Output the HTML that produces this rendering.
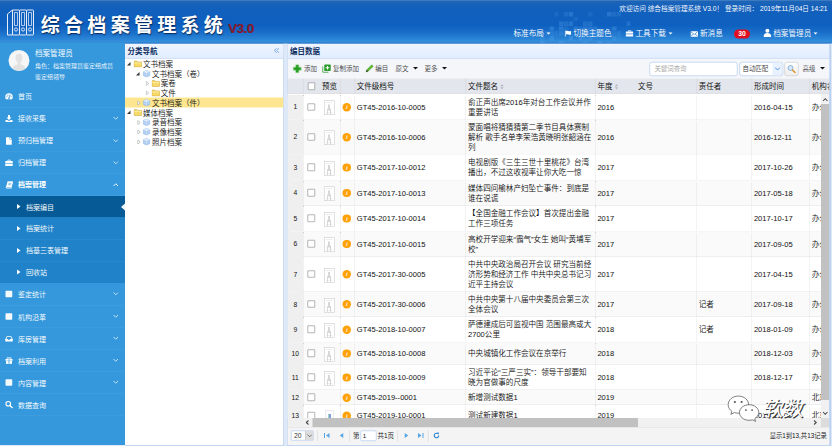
<!DOCTYPE html>
<html lang="zh-CN">
<head>
<meta charset="utf-8">
<title>综合档案管理系统 V3.0</title>
<style>
html,body{margin:0;padding:0;width:832px;height:446px;overflow:hidden;background:#dfe8f6}
#app{position:absolute;left:0;top:0;width:1664px;height:892px;transform:scale(.5);transform-origin:0 0;font-family:"Liberation Sans","Noto Sans CJK SC",sans-serif;font-size:15.15px;font-weight:350;color:#111;overflow:hidden;background:#dfe8f6}
#app *{box-sizing:border-box}
/* header */
#hd{position:absolute;left:0;top:0;width:1664px;height:86.6px;z-index:2;background:linear-gradient(to bottom,#4a86c8 0,#1d64b6 3px,#1260bc 14px,#0e60c0 50px,#1a70ca 66px,#2c88d8 80px,#3890dc 83.4px,#2f82d0 84.6px,#2f82d0 86.6px);color:#fff;overflow:hidden}
#hd .logo{position:absolute;left:13px;top:16px;width:58px;height:58px}
#hd .title{position:absolute;left:81.5px;top:22.5px;font-size:38px;line-height:56px;letter-spacing:8.6px;font-weight:700;white-space:nowrap;color:#fff;text-shadow:1px 2px 3px rgba(0,0,30,.7)}
#hd .ver{position:absolute;left:456px;top:38.5px;font-size:27px;line-height:34px;font-weight:bold;color:#8c1a2c;letter-spacing:-1px;text-shadow:1px 1px 1px rgba(0,0,40,.45)}
#hd .wel{position:absolute;right:9px;top:8px;font-size:13.3px;line-height:20px;white-space:pre;color:#fff}
#hd .nv{position:absolute;top:55px;height:24px;line-height:24px;font-size:15.2px;white-space:nowrap;color:#fff}
#hd .nv svg{vertical-align:-2px;margin-right:4px}
#hd .caret{display:inline-block;width:0;height:0;border-left:4px solid transparent;border-right:4px solid transparent;border-top:4.5px solid #fff;vertical-align:3px;margin-left:5px}
#hd .badge{position:absolute;left:1468px;top:59px;width:32px;height:18px;border-radius:9px;background:#e01020;color:#fff;font-size:13.8px;font-weight:bold;line-height:18px;text-align:center}
#hd .px{position:absolute;width:8.6px;height:8.6px;background:rgba(110,185,250,.24)}
/* sidebar */
#sb{position:absolute;left:0;top:85px;width:250px;height:805px;z-index:3;background:#3598dc;color:#fff;overflow:hidden}
#sb .av{position:absolute;left:17px;top:15px;width:42px;height:42px;border-radius:50%;background:#f6f6f6;overflow:hidden}
#sb .un{position:absolute;left:70px;top:10px;font-size:15.1px;line-height:22px;white-space:nowrap}
#sb .ur{position:absolute;left:70px;font-size:12px;line-height:18px;white-space:nowrap}
#sb .mi{position:absolute;left:0;width:250px;height:44.14px;line-height:44px;font-size:14px;white-space:nowrap;border-bottom:1px solid rgba(255,255,255,.08)}
#sb .mi .ic{position:absolute;left:10px;top:14px;width:16px;height:16px}
#sb .mi .tx{position:absolute;left:36px;top:0}
#sb .mi .chev{position:absolute;left:226px;top:18px;width:11px;height:7px}
#sb .sub{background:#2083c9;border-bottom:none}
#sb .sub .tx{left:52px}
#sb .sub .ar{position:absolute;left:34px;top:16.5px;width:0;height:0;border-top:5.5px solid transparent;border-bottom:5.5px solid transparent;border-left:7px solid #fff}
#sb .act{background:#065a96}
#sb .act:after{content:"";position:absolute;right:0;top:15px;width:0;height:0;border-top:7px solid transparent;border-bottom:7px solid transparent;border-right:8px solid #f0f6fb}
#sb .open{font-weight:bold}
/* tree panel */
#tp{position:absolute;left:250px;top:85px;width:318px;height:806px;background:#fff;border:1px solid #95b8e7;border-left:none;overflow:hidden}
.ph{position:absolute;left:0;top:0;right:0;height:32.4px;background:linear-gradient(to bottom,#95b8e7 0,#95b8e7 2.2px,#eff5ff 2.8px,#e0ecff 100%);border-bottom:1px solid #b4ccee;color:#0e2d5f;font-weight:bold;font-size:15px;line-height:34px;padding-left:5px;white-space:nowrap}
#tp .col{position:absolute;right:8px;top:9px;width:12px;height:12px}
#tp .tn{position:absolute;left:-1px;width:318px;height:19.4px;line-height:21px;font-size:15px;white-space:nowrap}
#tp .sel{background:#fde68f}
#tp .tn .ex{position:absolute;top:6.6px;width:0;height:0;border-left:7px solid transparent;border-bottom:7px solid #333}
#tp .tn .cl{position:absolute;top:5.6px;width:8px;height:10px}
#tp .tn .fi{position:absolute;top:2.6px;width:17px;height:15px}
#tp .tn .tt{position:absolute;top:0}
/* main panel */
#main{position:absolute;left:574px;top:85px;width:1087px;height:806px;background:#fff;border:1px solid #95b8e7;border-right:2px solid #86aee6;overflow:hidden}
#tb{position:absolute;left:0;right:0;top:32px;height:38.6px;background:#f4f6fa;font-size:13px;color:#444;white-space:nowrap}
#tb .b{position:absolute;top:0;height:38px;line-height:38px}
#tb .b svg{position:absolute;top:10px;left:0;width:18px;height:18px}
#tb .dn{display:inline-block;width:0;height:0;border-left:5px solid transparent;border-right:5px solid transparent;border-top:5px solid #111;vertical-align:2px;margin-left:9px}
#tb .inp{position:absolute;left:724px;top:5.5px;width:176px;height:28px;border:1px solid #95b8e7;border-radius:5px;background:#fff;font-size:12.8px;line-height:26px;color:#a0a0a0;padding-left:9px}
#tb .cmb{position:absolute;left:904px;top:5.5px;width:87px;height:28px;border:1px solid #95b8e7;border-radius:5px;background:#fff;font-size:12.8px;line-height:26px;color:#333;padding-left:5px;overflow:hidden}
#tb .cmb i{position:absolute;right:0;top:0;width:20px;height:26px;background:#e8f1ff}
#tb .cmb svg{position:absolute;right:4px;top:9px;width:12px;height:8px}
#tb .sbt{position:absolute;left:994px;top:5.5px;width:28px;height:28px;border:1px solid #bbb;border-radius:5px;background:linear-gradient(#fff,#eee)}
#tb .sbt svg{position:absolute;left:4px;top:4px;width:18px;height:18px}
#gh{position:absolute;left:0;right:0;top:70.6px;height:31.4px;background:#e3e6ec;font-size:15px;font-weight:400;line-height:31px;color:#111;white-space:nowrap;border-bottom:1px solid #dcdcdc}
#gh .h{position:absolute;top:0;height:31.4px;padding-left:3.8px;border-left:1px dotted #c4c4c4}
#gh .so{display:inline-block;width:8px;height:13px;vertical-align:-2px;margin-left:4px}
.cb{display:block;flex:none;width:14.6px;height:14.6px;border:1.6px solid #6f6f6f;border-radius:1px;background:#fff}
#gbody{position:absolute;left:0;top:103px;width:1067.5px;height:647.4px;overflow:hidden;background:#fff}
.r{position:relative;width:1100px;border-bottom:1px dotted #c8c8c8;background:#fff}
.r.alt{background:#fafafa}
.c{position:absolute;top:0;bottom:0;display:flex;align-items:center;border-left:1px dotted #ccc;font-size:15.15px;line-height:19.6px;white-space:nowrap;overflow:hidden}
.c>span.t{padding-left:3.8px;position:relative;top:0}
.c0{left:0;width:31.4px;background:#efefef;border-left:none;justify-content:center;font-size:13.4px;padding-top:.6px;font-weight:400}
.c1{left:31.4px;width:33.6px;justify-content:center;padding-right:2px}
.c2{left:65px;width:40.4px;justify-content:center;border-left:none}
.c3{left:105.4px;width:28.4px;justify-content:center}
.c4{left:133.8px;width:222.4px}
.c5{left:356.2px;width:258.8px}
.c6{left:615px;width:82px}
.c7{left:697px;width:120.8px;border-left:none}
.c8{left:817.8px;width:110.2px}
.c9{left:928px;width:115.8px}
.c10{left:1043.8px;width:60px}
.th1{display:block;flex:none;position:relative;left:-1.5px;top:2px;width:21.5px;height:29px;border:1.2px solid #c2c2c2;background:#fff}
.th1 i{position:absolute;left:3px;top:3px;right:3px;bottom:3px;border-top:1px solid #ddd;border-bottom:1px solid #e4e4e4}
.th1 b{position:absolute;left:8px;top:7px;width:2px;height:12px;background:#b0b0b0;box-shadow:3px 8px 0 -0.2px #c8c8c8,-3px 8px 0 -0.2px #d0d0d0}
.th2{display:block;flex:none;top:2px;left:-2px;position:relative;width:17px;height:26px;border:1px solid #d8dce8;background:#fdfdff}
.th2 i{position:absolute;left:6px;top:7px;width:5px;height:12px;background:#7fa3d8;border-left:1.500px solid #8fc79a}
.oi{display:block;flex:none;position:relative;left:-1.6px;top:.6px;width:16.6px;height:16.6px;border-radius:50%;background:#ffa20a;color:#fff;font-size:12px;line-height:16.6px;text-align:center;font-style:italic;font-weight:bold}
.oi i{font-style:italic;opacity:.85}
/* scrollbars */
#vs{position:absolute;left:1067.2px;top:102px;width:16.3px;height:648.4px;background:#f1f1f1}
#vs .t{position:absolute;left:0;top:20px;width:17px;height:592px;background:#c1c1c1}
#vs svg{position:absolute;left:3px;width:11px;height:7px}
#hs{position:absolute;left:31.4px;top:750.4px;width:1035.8px;height:17.4px;background:#f1f1f1}
#hs .t{position:absolute;left:19px;top:0;height:17.4px;width:651px;background:#c1c1c1}
#hs svg{position:absolute;top:4px;width:7px;height:10px}
#corner{position:absolute;left:1067.2px;top:750.4px;width:16.3px;height:17.4px;background:#dcdcdc}
#hsl{position:absolute;left:0;top:750.4px;width:31.4px;height:17.4px;background:#efefef}
/* pager */
#pg{position:absolute;left:0;right:0;top:767.8px;height:36.2px;background:#f4f4f4;border-top:1px solid #dddddd;font-size:13px;color:#111;white-space:nowrap}
#pg .sel{position:absolute;left:6.5px;top:6.5px;width:45px;height:20px;border:1px solid #95b8e7;border-radius:2px;background:#fff;font-size:13.6px;line-height:18px;padding-left:5.5px;color:#333}
#pg .sel i{position:absolute;right:0;top:0;width:16px;height:18px;background:#ddd;border-left:1px solid #bbb}
#pg .sep{position:absolute;top:6px;width:0;height:22px;border-left:1px solid #ccc;border-right:1px solid #fff}
#pg svg{position:absolute;top:9px;width:14px;height:14px}
#pg .tx{position:absolute;top:0;line-height:34px}
#pg .pin{position:absolute;left:145.5px;top:6.5px;width:32px;height:21px;border:1px solid #95b8e7;border-radius:3px;background:#fff;font-size:12.5px;line-height:19px;padding-left:4px}
#pg .inf{position:absolute;right:5.5px;top:0;line-height:32px;font-size:12.6px}
/* watermark */
#wm{position:absolute;left:878px;top:703px;width:170px;height:56px}
#wm .t{position:absolute;left:74px;top:4px;font-size:41px;line-height:48px;color:#fff;white-space:nowrap;font-weight:400;transform:skewX(-10deg);text-shadow:2px 2px 0 #353535,2.8px 2.6px 1px rgba(50,50,50,.6)}

</style>
</head>
<body>
<div id="app">
<div id="hd">
<span class="px" style="left:1108.8px;top:24.0px;opacity:0.45"></span><span class="px" style="left:1128.0px;top:24.0px;opacity:0.64"></span><span class="px" style="left:1137.6px;top:24.0px;opacity:1.00"></span><span class="px" style="left:1176.0px;top:24.0px;opacity:0.45"></span><span class="px" style="left:1214.4px;top:24.0px;opacity:1.00"></span><span class="px" style="left:1224.0px;top:24.0px;opacity:0.64"></span><span class="px" style="left:1233.6px;top:24.0px;opacity:0.64"></span><span class="px" style="left:1147.2px;top:33.6px;opacity:0.45"></span><span class="px" style="left:1118.4px;top:43.2px;opacity:1.00"></span><span class="px" style="left:1128.0px;top:43.2px;opacity:0.82"></span><span class="px" style="left:1137.6px;top:43.2px;opacity:1.00"></span><span class="px" style="left:1166.4px;top:43.2px;opacity:0.82"></span><span class="px" style="left:1176.0px;top:43.2px;opacity:0.82"></span><span class="px" style="left:1252.8px;top:43.2px;opacity:0.82"></span><span class="px" style="left:1099.2px;top:52.8px;opacity:1.00"></span><span class="px" style="left:1118.4px;top:52.8px;opacity:1.00"></span><span class="px" style="left:1128.0px;top:52.8px;opacity:0.45"></span><span class="px" style="left:1147.2px;top:52.8px;opacity:0.82"></span><span class="px" style="left:1156.8px;top:52.8px;opacity:0.64"></span><span class="px" style="left:1166.4px;top:52.8px;opacity:1.00"></span><span class="px" style="left:1176.0px;top:52.8px;opacity:1.00"></span><span class="px" style="left:1185.6px;top:52.8px;opacity:0.82"></span><span class="px" style="left:1224.0px;top:52.8px;opacity:1.00"></span><span class="px" style="left:1080.0px;top:62.4px;opacity:0.64"></span><span class="px" style="left:1089.6px;top:62.4px;opacity:0.64"></span><span class="px" style="left:1099.2px;top:62.4px;opacity:0.64"></span><span class="px" style="left:1108.8px;top:62.4px;opacity:0.45"></span><span class="px" style="left:1118.4px;top:62.4px;opacity:0.82"></span><span class="px" style="left:1137.6px;top:62.4px;opacity:0.64"></span><span class="px" style="left:1156.8px;top:62.4px;opacity:0.45"></span><span class="px" style="left:1166.4px;top:62.4px;opacity:1.00"></span><span class="px" style="left:1176.0px;top:62.4px;opacity:1.00"></span><span class="px" style="left:1185.6px;top:62.4px;opacity:1.00"></span><span class="px" style="left:1195.2px;top:62.4px;opacity:0.45"></span><span class="px" style="left:1224.0px;top:62.4px;opacity:0.45"></span><span class="px" style="left:1233.6px;top:62.4px;opacity:0.64"></span><span class="px" style="left:1080.0px;top:72.0px;opacity:0.64"></span><span class="px" style="left:1099.2px;top:72.0px;opacity:0.82"></span><span class="px" style="left:1137.6px;top:72.0px;opacity:1.00"></span><span class="px" style="left:1156.8px;top:72.0px;opacity:1.00"></span><span class="px" style="left:1166.4px;top:72.0px;opacity:0.64"></span><span class="px" style="left:1176.0px;top:72.0px;opacity:0.82"></span><span class="px" style="left:1224.0px;top:72.0px;opacity:0.82"></span><span class="px" style="left:1233.6px;top:72.0px;opacity:0.45"></span><span class="px" style="left:1080.0px;top:81.6px;opacity:0.82"></span><span class="px" style="left:1118.4px;top:81.6px;opacity:0.82"></span><span class="px" style="left:1166.4px;top:81.6px;opacity:0.64"></span><span class="px" style="left:1195.2px;top:81.6px;opacity:1.00"></span><span class="px" style="left:1214.4px;top:81.6px;opacity:0.45"></span>
<svg class="logo" viewBox="0 0 58 58" fill="none" stroke="#e8eef8" stroke-width="2" stroke-linejoin="round">
<path d="M2 12 L12 4 V54 H2 Z"/>
<rect x="12" y="4" width="14" height="50" rx="1.5"/><rect x="26" y="4" width="14" height="50" rx="1.5"/><rect x="40" y="4" width="14" height="50" rx="1.5"/>
<rect x="16" y="9" width="6" height="26" stroke-width="1.5"/><rect x="30" y="9" width="6" height="26" stroke-width="1.5"/><rect x="44" y="9" width="6" height="26" stroke-width="1.5"/>
<circle cx="19" cy="43" r="3.2" stroke-width="1.8"/><circle cx="33" cy="43" r="3.2" stroke-width="1.8"/><circle cx="47" cy="43" r="3.2" stroke-width="1.8"/>
</svg>
<div class="title">综合档案管理系统</div>
<div class="ver">V3.0</div>
<div class="wel">欢迎访问 综合档案管理系统 V3.0！ 登录时间： 2019年11月04日 14:21</div>
<div class="nv" style="left:1027px">标准布局<span class="caret"></span></div>
<div class="nv" style="left:1129px"><svg width="14" height="14" viewBox="0 0 14 14"><path d="M1.5 1v12" stroke="#fff" stroke-width="1.8"/><path d="M3 2c3-1.5 5 1.5 10 0v7c-5 1.500-7-1.500-10 0z" fill="#fff"/></svg>切换主题色</div>
<div class="nv" style="left:1251px"><svg width="16" height="14" viewBox="0 0 16 14"><path d="M5.500 3V1.500h5V3" stroke="#fff" stroke-width="1.600" fill="none"/><rect x="0.500" y="3" width="15" height="10" rx="1.200" fill="#fff"/><rect x="0.500" y="7.300" width="15" height="1.200" fill="#1a6cc6"/></svg>工具下载<span class="caret"></span></div>
<div class="nv" style="left:1381px"><svg width="15" height="12" viewBox="0 0 15 12"><rect x="0" y="0.500" width="15" height="11" rx="1.200" fill="#fff"/><path d="M1 1.500l6.500 5.500 6.500-5.500M1 10.500l4.500-4.500M14 10.500l-4.500-4.500" stroke="#1a6cc6" stroke-width="1.300" fill="none"/></svg>新消息</div>
<div class="badge">30</div>
<div class="nv" style="left:1527px"><svg width="15.500" height="17" viewBox="0 0 14 15"><circle cx="7" cy="4" r="3.600" fill="#fff"/><path d="M0 15c0-5 2.500-7 7-7s7 2 7 7z" fill="#fff"/></svg>档案管理员<span class="caret"></span></div>
</div>

<div id="sb">
<div class="av"><svg viewBox="0 0 42 42" width="42" height="42"><ellipse cx="21" cy="16" rx="7" ry="8.500" fill="#e2e2e2"/><path d="M7 44c0-11 5-15.500 14-15.500s14 4.500 14 15.500z" fill="#e2e2e2"/><rect x="18" y="22" width="6" height="8" fill="#e2e2e2"/></svg></div>
<div class="un">档案管理员</div>
<div class="ur" style="top:38px">角色：档案管理员鉴定组成员</div>
<div class="ur" style="top:59px">鉴定组领导</div>
<div class="mi" style="top:86.40px;height:44.08px;line-height:43.58px"><svg class="ic" viewBox="0 0 16 16"><path d="M8 1.500A7.500 7.500 0 0 0 0.500 9c0 1.700.5 3.200 1.300 4.500h12.400c.8-1.300 1.300-2.800 1.300-4.500A7.500 7.500 0 0 0 8 1.500z" fill="#fff"/><circle cx="3.800" cy="8.500" r="1.200" fill="#3598dc"/><circle cx="5.800" cy="5.200" r="1.200" fill="#3598dc"/><circle cx="10.200" cy="5.200" r="1.200" fill="#3598dc"/><circle cx="12.200" cy="8.500" r="1.200" fill="#3598dc"/><path d="M8 11.500l1.300-5" stroke="#3598dc" stroke-width="1.600" stroke-linecap="round"/><circle cx="8" cy="11.300" r="1.500" fill="#3598dc"/></svg><span class="tx">首页</span></div>
<div class="mi" style="top:130.48px;height:44.08px;line-height:43.58px"><svg class="ic" viewBox="0 0 16 16"><path d="M6 1h4v5h3l-5 5-5-5h3z" fill="#fff"/><path d="M1 11h4l1 1.500h4l1-1.500h4v4H1z" fill="#fff"/></svg><span class="tx">接收采集</span><svg class="chev" viewBox="0 0 11 7"><path d="M1 1l4.500 4.500L10 1" stroke="#e6f1fa" stroke-width="1.600" fill="none"/></svg></div>
<div class="mi" style="top:174.56px;height:44.08px;line-height:43.58px"><svg class="ic" viewBox="0 0 16 16"><path d="M2 0.500h7v4.500h4.500V15.500H2z" fill="#fff"/><path d="M10 0.500l3.500 3.500H10z" fill="#fff"/></svg><span class="tx">预归档管理</span><svg class="chev" viewBox="0 0 11 7"><path d="M1 1l4.500 4.500L10 1" stroke="#e6f1fa" stroke-width="1.600" fill="none"/></svg></div>
<div class="mi" style="top:218.64px;height:44.08px;line-height:43.58px"><svg class="ic" viewBox="0 0 16 16"><path d="M5.500 4V2.200h5V4" stroke="#fff" stroke-width="1.500" fill="none"/><rect x="0.500" y="4" width="15" height="10" rx="1.200" fill="#fff"/><rect x="0.500" y="8.200" width="15" height="1.200" fill="#3598dc"/></svg><span class="tx">归档管理</span><svg class="chev" viewBox="0 0 11 7"><path d="M1 1l4.500 4.500L10 1" stroke="#e6f1fa" stroke-width="1.600" fill="none"/></svg></div>
<div class="mi open" style="top:262.72px;height:44.08px;line-height:43.58px"><svg class="ic" viewBox="0 0 16 16"><path d="M5 1.500h10.500l-3 10.500H3c-1.600 0-1.600 2.300 0 2.300h9.800l.6-2" fill="none" stroke="#fff" stroke-width="1.500" stroke-linejoin="round"/><path d="M5 1.500h10.500l-3 10.500H2z" fill="#fff"/><path d="M7 4.800h5.500M6.300 7.300h5.500" stroke="#3598dc" stroke-width="1.100"/></svg><span class="tx">档案管理</span><svg class="chev" viewBox="0 0 11 7"><path d="M1 6l4.500-4.500L10 6" stroke="#fff" stroke-width="1.800" fill="none"/></svg></div>
<div class="mi sub act" style="top:306.80px;height:43.66px;line-height:44.36px"><span class="ar"></span><span class="tx">档案编目</span></div>
<div class="mi sub" style="top:350.46px;height:43.66px;line-height:44.36px"><span class="ar"></span><span class="tx">档案统计</span></div>
<div class="mi sub" style="top:394.12px;height:43.66px;line-height:44.36px"><span class="ar"></span><span class="tx">档基三表管理</span></div>
<div class="mi sub" style="top:437.78px;height:43.66px;line-height:44.36px"><span class="ar"></span><span class="tx">回收站</span></div>
<div class="mi" style="top:481.44px;height:44.2px;line-height:46.50px"><svg class="ic" viewBox="0 0 16 16"><rect x="1" y="1.500" width="13.500" height="13" rx="1.600" fill="#f4f9fd"/></svg><span class="tx">鉴定统计</span><svg class="chev" viewBox="0 0 11 7"><path d="M1 1l4.500 4.500L10 1" stroke="#e6f1fa" stroke-width="1.600" fill="none"/></svg></div>
<div class="mi" style="top:525.64px;height:44.2px;line-height:46.50px"><svg class="ic" viewBox="0 0 16 16"><rect x="1" y="1.500" width="13.500" height="13" rx="1.600" fill="#f4f9fd"/></svg><span class="tx">机构沿革</span><svg class="chev" viewBox="0 0 11 7"><path d="M1 1l4.500 4.500L10 1" stroke="#e6f1fa" stroke-width="1.600" fill="none"/></svg></div>
<div class="mi" style="top:569.84px;height:44.2px;line-height:46.50px"><svg class="ic" viewBox="0 0 16 16"><path d="M3.500 3.500h9l3 6v4.500H0.500V9.500z" fill="#fff"/><path d="M4.500 5h7l1.800 4H10.500l-0.800 1.600H6.300L5.500 9H2.700z" fill="#3598dc"/></svg><span class="tx">库房管理</span><svg class="chev" viewBox="0 0 11 7"><path d="M1 1l4.500 4.500L10 1" stroke="#e6f1fa" stroke-width="1.600" fill="none"/></svg></div>
<div class="mi" style="top:614.04px;height:44.2px;line-height:46.50px"><svg class="ic" viewBox="0 0 16 16"><rect x="1" y="5" width="14" height="3.500" fill="#fff"/><rect x="2" y="9.200" width="12" height="5.500" fill="#fff"/><path d="M8 5V14.500" stroke="#3598dc" stroke-width="1.500"/><circle cx="5.500" cy="3.200" r="1.700" stroke="#fff" stroke-width="1.300" fill="none"/><circle cx="10.500" cy="3.200" r="1.700" stroke="#fff" stroke-width="1.300" fill="none"/></svg><span class="tx">档案利用</span><svg class="chev" viewBox="0 0 11 7"><path d="M1 1l4.500 4.500L10 1" stroke="#e6f1fa" stroke-width="1.600" fill="none"/></svg></div>
<div class="mi" style="top:658.24px;height:44.2px;line-height:46.50px"><svg class="ic" viewBox="0 0 16 16"><rect x="1" y="1.500" width="13.500" height="13" rx="1.600" fill="#f4f9fd"/></svg><span class="tx">内容管理</span><svg class="chev" viewBox="0 0 11 7"><path d="M1 1l4.500 4.500L10 1" stroke="#e6f1fa" stroke-width="1.600" fill="none"/></svg></div>
<div class="mi" style="top:702.44px;height:44.2px;line-height:46.50px"><svg class="ic" viewBox="0 0 16 16"><circle cx="6.500" cy="6.500" r="4.600" stroke="#fff" stroke-width="2.200" fill="none"/><path d="M10 10l4.500 4.500" stroke="#fff" stroke-width="2.600" stroke-linecap="round"/></svg><span class="tx">数据查询</span></div>
</div>
<div id="tp">
<div class="ph">分类导航<svg class="col" viewBox="0 0 12 12"><path d="M6 1.500L2 6l4 4.500M10.500 1.500L6.500 6l4 4.500" stroke="#5b8fd9" stroke-width="1.500" fill="none"/></svg></div>
<div class="tn " style="top:31.60px"><span class="ex" style="left:5.0px"></span><svg class="fi" style="left:18.0px" viewBox="0 0 17 15"><path d="M1 3.500c0-1 .5-1.500 1.500-1.500h4l1.500 1.800h7c1 0 1.500.5 1.500 1.500V12.500c0 1-.5 1.500-1.500 1.500h-12.500c-1 0-1.500-.5-1.500-1.500z" fill="#f7d96a" stroke="#c9a02c" stroke-width="1"/><path d="M1.500 6h14" stroke="#fdf0b0" stroke-width="1.500"/></svg><span class="tt" style="left:37.0px">文书档案</span></div>
<div class="tn " style="top:51.02px"><span class="ex" style="left:22.6px"></span><svg class="fi" style="left:35.8px" viewBox="0 0 17 15"><path d="M8 0.500l6.500 3.200v7.300L8 14.500 1.500 11V3.700z" fill="#a9c9f1" stroke="#7fabe2" stroke-width=".8"/><path d="M8 0.500l6.500 3.200L8 7 1.500 3.700z" fill="#dbe9fb"/><path d="M8 7v7.500M1.500 7.300L8 10.700l6.500-3.400" stroke="#e4effc" stroke-width=".8" fill="none"/></svg><span class="tt" style="left:54.8px">文书档案（卷）</span></div>
<div class="tn " style="top:70.44px"><svg class="cl" style="left:42.2px" viewBox="0 0 8 10"><path d="M1.500 1l5 4-5 4z" fill="#fff" stroke="#999" stroke-width="1"/></svg><svg class="fi" style="left:53.6px" viewBox="0 0 17 15"><path d="M1 3.500c0-1 .5-1.500 1.500-1.500h4l1.500 1.800h7c1 0 1.500.5 1.500 1.500V12.500c0 1-.5 1.500-1.500 1.500h-12.500c-1 0-1.500-.5-1.500-1.500z" fill="#f7d96a" stroke="#c9a02c" stroke-width="1"/><path d="M1.500 6h14" stroke="#fdf0b0" stroke-width="1.500"/></svg><span class="tt" style="left:72.6px">案卷</span></div>
<div class="tn " style="top:89.86px"><svg class="cl" style="left:42.2px" viewBox="0 0 8 10"><path d="M1.500 1l5 4-5 4z" fill="#fff" stroke="#999" stroke-width="1"/></svg><svg class="fi" style="left:53.6px" viewBox="0 0 17 15"><path d="M1 3.500c0-1 .5-1.500 1.500-1.500h4l1.500 1.800h7c1 0 1.500.5 1.500 1.500V12.500c0 1-.5 1.500-1.500 1.500h-12.500c-1 0-1.500-.5-1.500-1.500z" fill="#f7d96a" stroke="#c9a02c" stroke-width="1"/><path d="M1.500 6h14" stroke="#fdf0b0" stroke-width="1.500"/></svg><span class="tt" style="left:72.6px">文件</span></div>
<div class="tn sel" style="top:109.28px"><svg class="cl" style="left:24.6px" viewBox="0 0 8 10"><path d="M1.500 1l5 4-5 4z" fill="#fff" stroke="#999" stroke-width="1"/></svg><svg class="fi" style="left:35.8px" viewBox="0 0 17 15"><path d="M8 0.500l6.500 3.200v7.300L8 14.500 1.500 11V3.700z" fill="#a9c9f1" stroke="#7fabe2" stroke-width=".8"/><path d="M8 0.500l6.500 3.200L8 7 1.500 3.700z" fill="#dbe9fb"/><path d="M8 7v7.500M1.500 7.300L8 10.700l6.500-3.400" stroke="#e4effc" stroke-width=".8" fill="none"/></svg><span class="tt" style="left:54.8px">文书档案（件）</span></div>
<div class="tn " style="top:128.70px"><span class="ex" style="left:5.0px"></span><svg class="fi" style="left:18.0px" viewBox="0 0 17 15"><path d="M1 3.500c0-1 .5-1.500 1.500-1.500h4l1.500 1.800h7c1 0 1.500.5 1.500 1.500V12.500c0 1-.5 1.500-1.500 1.500h-12.500c-1 0-1.500-.5-1.500-1.500z" fill="#f7d96a" stroke="#c9a02c" stroke-width="1"/><path d="M1.500 6h14" stroke="#fdf0b0" stroke-width="1.500"/></svg><span class="tt" style="left:37.0px">媒体档案</span></div>
<div class="tn " style="top:148.12px"><svg class="cl" style="left:24.6px" viewBox="0 0 8 10"><path d="M1.500 1l5 4-5 4z" fill="#fff" stroke="#999" stroke-width="1"/></svg><svg class="fi" style="left:35.8px" viewBox="0 0 17 15"><path d="M8 0.500l6.500 3.200v7.300L8 14.500 1.500 11V3.700z" fill="#a9c9f1" stroke="#7fabe2" stroke-width=".8"/><path d="M8 0.500l6.500 3.200L8 7 1.500 3.700z" fill="#dbe9fb"/><path d="M8 7v7.500M1.500 7.300L8 10.700l6.500-3.400" stroke="#e4effc" stroke-width=".8" fill="none"/></svg><span class="tt" style="left:54.8px">录音档案</span></div>
<div class="tn " style="top:167.54px"><svg class="cl" style="left:24.6px" viewBox="0 0 8 10"><path d="M1.500 1l5 4-5 4z" fill="#fff" stroke="#999" stroke-width="1"/></svg><svg class="fi" style="left:35.8px" viewBox="0 0 17 15"><path d="M8 0.500l6.500 3.200v7.300L8 14.500 1.500 11V3.700z" fill="#a9c9f1" stroke="#7fabe2" stroke-width=".8"/><path d="M8 0.500l6.500 3.200L8 7 1.500 3.700z" fill="#dbe9fb"/><path d="M8 7v7.500M1.500 7.300L8 10.700l6.500-3.400" stroke="#e4effc" stroke-width=".8" fill="none"/></svg><span class="tt" style="left:54.8px">录像档案</span></div>
<div class="tn " style="top:186.96px"><svg class="cl" style="left:24.6px" viewBox="0 0 8 10"><path d="M1.500 1l5 4-5 4z" fill="#fff" stroke="#999" stroke-width="1"/></svg><svg class="fi" style="left:35.8px" viewBox="0 0 17 15"><path d="M8 0.500l6.500 3.200v7.300L8 14.500 1.500 11V3.700z" fill="#a9c9f1" stroke="#7fabe2" stroke-width=".8"/><path d="M8 0.500l6.500 3.200L8 7 1.500 3.700z" fill="#dbe9fb"/><path d="M8 7v7.500M1.500 7.300L8 10.700l6.500-3.400" stroke="#e4effc" stroke-width=".8" fill="none"/></svg><span class="tt" style="left:54.8px">照片档案</span></div>
</div>
<div id="main">
<div class="ph">编目数据</div>
<div id="tb">
<div class="b" style="left:10px;padding-left:23px"><svg viewBox="0 0 18 18" style="width:19px;height:19px;top:9.500px;left:-0.500px"><path d="M6.800 2.200h4.400v4.600h4.600v4.400h-4.600v4.600H6.800v-4.600H2.200V6.800h4.600z" fill="#b4e2ae" stroke="#b4e2ae" stroke-width="3.600" stroke-linejoin="round"/><path d="M7 2.600h4v4.400h4.400v4h-4.400v4.400H7v-4.400H2.600V7H7z" fill="#239c23" stroke="#239c23" stroke-width=".8" stroke-linejoin="round"/></svg>添加</div>
<div class="b" style="left:69px;padding-left:22px"><svg viewBox="0 0 18 18"><path d="M1.500 5v11.500H13" stroke="#3aa03a" stroke-width="1.600" fill="none"/><rect x="4.500" y="1" width="13" height="13" rx="1.500" fill="#2c9c2c"/><path d="M11 4v7M7.500 7.500h7" stroke="#fff" stroke-width="2.200"/></svg>复制添加</div>
<div class="b" style="left:155px;padding-left:20.500px"><svg viewBox="0 0 18 18"><path d="M2 16l1.500-4.500L13.500 1.500l3 3L6.500 14.500z" fill="#5cb82c" stroke="#3f8f1c" stroke-width=".8"/><path d="M2 16l1.500-4.500 3 3z" fill="#333"/></svg>编目</div>
<div class="b" style="left:216px">原文<span class="dn"></span></div>
<div class="b" style="left:274px">更多<span class="dn"></span></div>
<div class="inp">关键词查询</div>
<div class="cmb">自动匹配<i></i><svg viewBox="0 0 12 8"><path d="M1 1l5 5 5-5" stroke="#3b7fd6" stroke-width="1.600" fill="none"/></svg></div>
<div class="sbt"><svg viewBox="0 0 18 18"><circle cx="7" cy="7" r="5" fill="#d6e8fa" stroke="#7aa6d8" stroke-width="1.600"/><path d="M11 11l5 5" stroke="#e0932c" stroke-width="3" stroke-linecap="round"/></svg></div>
<div class="b" style="left:1030px">高级<span class="dn"></span></div>
</div>
<div id="gh">
<div class="h" style="left:0;width:31.400px;border-left:none"></div>
<div class="h" style="left:31.400px;width:33.600px;padding-left:8.500px"><span class="cb" style="margin-top:8.500px"></span></div>
<div class="h" style="left:65px;width:40.400px;border-left:none;padding-left:4px">预览</div>
<div class="h" style="left:105.400px;width:28.400px"></div>
<div class="h" style="left:133.800px;width:222.400px">文件级档号</div>
<div class="h" style="left:356.200px;width:258.800px">文件题名<svg class="so" viewBox="0 0 7 11"><path d="M3.500 0.500L6.500 4.500h-6zM3.500 10.500L6.500 6.500h-6z" fill="#b4b9c4"/></svg></div>
<div class="h" style="left:615px;width:82px">年度<svg class="so" viewBox="0 0 7 11"><path d="M3.500 0.500L6.500 4.500h-6zM3.500 10.500L6.500 6.500h-6z" fill="#b4b9c4"/></svg></div>
<div class="h" style="left:697px;width:120.800px;border-left:none">文号</div>
<div class="h" style="left:817.800px;width:110.200px">责任者</div>
<div class="h" style="left:928px;width:115.800px">形成时间</div>
<div class="h" style="left:1043.800px;width:40px;overflow:hidden">机构名称</div>
</div>

<div id="gbody">
<div class="r" style="height:50.6px">
<div class="c c0">1</div><div class="c c1"><span class="cb"></span></div><div class="c c2"><span class="th1"><i></i><b></b></span></div><div class="c c3"><span class="oi"><i>i</i></span></div><div class="c c4"><span class="t">GT45-2016-10-0005</span></div><div class="c c5"><span class="t">俞正声出席2016年对台工作会议并作<br>重要讲话</span></div><div class="c c6"><span class="t">2016</span></div><div class="c c7"></div><div class="c c8"><span class="t"></span></div><div class="c c9"><span class="t">2016-04-15</span></div><div class="c c10"><span class="t">办公室</span></div>
</div>
<div class="r alt" style="height:69.8px">
<div class="c c0">2</div><div class="c c1"><span class="cb"></span></div><div class="c c2"><span class="th1"><i></i><b></b></span></div><div class="c c3"><span class="oi"><i>i</i></span></div><div class="c c4"><span class="t">GT45-2016-10-0006</span></div><div class="c c5"><span class="t">蒙面唱将猜猜猜第二季节目具体赛制<br>解析 歌手名单李荣浩黄晓明张韶涵在<br>列</span></div><div class="c c6"><span class="t">2016</span></div><div class="c c7"></div><div class="c c8"><span class="t"></span></div><div class="c c9"><span class="t">2016-12-11</span></div><div class="c c10"><span class="t">办公室</span></div>
</div>
<div class="r" style="height:51.2px">
<div class="c c0">3</div><div class="c c1"><span class="cb"></span></div><div class="c c2"><span class="th1"><i></i><b></b></span></div><div class="c c3"><span class="oi"><i>i</i></span></div><div class="c c4"><span class="t">GT45-2017-10-0012</span></div><div class="c c5"><span class="t">电视剧版《三生三世十里桃花》台湾<br>播出，不过这收视率让你大吃一惊</span></div><div class="c c6"><span class="t">2017</span></div><div class="c c7"></div><div class="c c8"><span class="t"></span></div><div class="c c9"><span class="t">2017-10-26</span></div><div class="c c10"><span class="t">办公室</span></div>
</div>
<div class="r alt" style="height:51.0px">
<div class="c c0">4</div><div class="c c1"><span class="cb"></span></div><div class="c c2"><span class="th1"><i></i><b></b></span></div><div class="c c3"><span class="oi"><i>i</i></span></div><div class="c c4"><span class="t">GT45-2017-10-0013</span></div><div class="c c5"><span class="t">媒体四问榆林产妇坠亡事件：到底是<br>谁在说谎</span></div><div class="c c6"><span class="t">2017</span></div><div class="c c7"></div><div class="c c8"><span class="t"></span></div><div class="c c9"><span class="t">2017-05-18</span></div><div class="c c10"><span class="t">办公室</span></div>
</div>
<div class="r" style="height:51.0px">
<div class="c c0">5</div><div class="c c1"><span class="cb"></span></div><div class="c c2"><span class="th1"><i></i><b></b></span></div><div class="c c3"><span class="oi"><i>i</i></span></div><div class="c c4"><span class="t">GT45-2017-10-0014</span></div><div class="c c5"><span class="t">【全国金融工作会议】首次提出金融<br>工作三项任务</span></div><div class="c c6"><span class="t">2017</span></div><div class="c c7"></div><div class="c c8"><span class="t"></span></div><div class="c c9"><span class="t">2017-10-17</span></div><div class="c c10"><span class="t">办公室</span></div>
</div>
<div class="r alt" style="height:51.0px">
<div class="c c0">6</div><div class="c c1"><span class="cb"></span></div><div class="c c2"><span class="th1"><i></i><b></b></span></div><div class="c c3"><span class="oi"><i>i</i></span></div><div class="c c4"><span class="t">GT45-2017-10-0015</span></div><div class="c c5"><span class="t">高校开学迎来“霸气”女生 她叫“黄埔军<br>校”</span></div><div class="c c6"><span class="t">2017</span></div><div class="c c7"></div><div class="c c8"><span class="t"></span></div><div class="c c9"><span class="t">2017-09-05</span></div><div class="c c10"><span class="t">办公室</span></div>
</div>
<div class="r" style="height:70.0px">
<div class="c c0">7</div><div class="c c1"><span class="cb"></span></div><div class="c c2"><span class="th1"><i></i><b></b></span></div><div class="c c3"><span class="oi"><i>i</i></span></div><div class="c c4"><span class="t">GT45-2017-30-0005</span></div><div class="c c5"><span class="t">中共中央政治局召开会议 研究当前经<br>济形势和经济工作 中共中央总书记习<br>近平主持会议</span></div><div class="c c6"><span class="t">2017</span></div><div class="c c7"></div><div class="c c8"><span class="t"></span></div><div class="c c9"><span class="t">2017-04-15</span></div><div class="c c10"><span class="t">办公室</span></div>
</div>
<div class="r alt" style="height:50.2px">
<div class="c c0">8</div><div class="c c1"><span class="cb"></span></div><div class="c c2"><span class="th1"><i></i><b></b></span></div><div class="c c3"><span class="oi"><i>i</i></span></div><div class="c c4"><span class="t">GT45-2017-30-0006</span></div><div class="c c5"><span class="t">中共中央第十八届中央委员会第三次<br>全体会议</span></div><div class="c c6"><span class="t">2017</span></div><div class="c c7"></div><div class="c c8"><span class="t">记者</span></div><div class="c c9"><span class="t">2017-09-18</span></div><div class="c c10"><span class="t">办公室</span></div>
</div>
<div class="r" style="height:50.8px">
<div class="c c0">9</div><div class="c c1"><span class="cb"></span></div><div class="c c2"><span class="th1"><i></i><b></b></span></div><div class="c c3"><span class="oi"><i>i</i></span></div><div class="c c4"><span class="t">GT45-2018-10-0007</span></div><div class="c c5"><span class="t">萨德建成后可监视中国 范围最高或大<br>2700公里</span></div><div class="c c6"><span class="t">2018</span></div><div class="c c7"></div><div class="c c8"><span class="t">记者</span></div><div class="c c9"><span class="t">2018-01-09</span></div><div class="c c10"><span class="t">办公室</span></div>
</div>
<div class="r alt" style="height:45.0px">
<div class="c c0">10</div><div class="c c1"><span class="cb"></span></div><div class="c c2"><span class="th1"><i></i><b></b></span></div><div class="c c3"><span class="oi"><i>i</i></span></div><div class="c c4"><span class="t">GT45-2018-10-0008</span></div><div class="c c5"><span class="t">中央城镇化工作会议在京举行</span></div><div class="c c6"><span class="t">2018</span></div><div class="c c7"></div><div class="c c8"><span class="t"></span></div><div class="c c9"><span class="t">2018-12-03</span></div><div class="c c10"><span class="t">办公室</span></div>
</div>
<div class="r" style="height:50.6px">
<div class="c c0">11</div><div class="c c1"><span class="cb"></span></div><div class="c c2"><span class="th1"><i></i><b></b></span></div><div class="c c3"><span class="oi"><i>i</i></span></div><div class="c c4"><span class="t">GT45-2018-10-0009</span></div><div class="c c5"><span class="t">习近平论“三严三实”：领导干部要知<br>晓为官做事的尺度</span></div><div class="c c6"><span class="t">2018</span></div><div class="c c7"></div><div class="c c8"><span class="t"></span></div><div class="c c9"><span class="t">2018-12-17</span></div><div class="c c10"><span class="t">办公室</span></div>
</div>
<div class="r alt" style="height:30.0px">
<div class="c c0">12</div><div class="c c1"><span class="cb"></span></div><div class="c c2"></div><div class="c c3"><span class="oi"><i>i</i></span></div><div class="c c4"><span class="t">GT45-2019--0001</span></div><div class="c c5"><span class="t">新增测试数据1</span></div><div class="c c6"><span class="t">2019</span></div><div class="c c7"></div><div class="c c8"><span class="t"></span></div><div class="c c9"><span class="t"></span></div><div class="c c10"><span class="t">北京</span></div>
</div>
<div class="r" style="height:42.6px">
<div class="c c0">13</div><div class="c c1"><span class="cb"></span></div><div class="c c2"><span class="th2"><i></i></span></div><div class="c c3"><span class="oi"><i>i</i></span></div><div class="c c4"><span class="t">GT45-2019-10-0001</span></div><div class="c c5"><span class="t">测试新建数据1</span></div><div class="c c6"><span class="t">2019</span></div><div class="c c7"></div><div class="c c8"><span class="t"></span></div><div class="c c9"><span class="t">2019-11-01</span></div><div class="c c10"><span class="t">北京</span></div>
</div>
</div>
<div id="vs"><svg style="top:8px" viewBox="0 0 11 7"><path d="M1 6l4.500-4.500L10 6" stroke="#454545" stroke-width="2.100" fill="none"/></svg><div class="t"></div><svg style="top:635px" viewBox="0 0 11 7"><path d="M1 1l4.500 4.500L10 1" stroke="#454545" stroke-width="2.100" fill="none"/></svg></div>
<div id="hsl"></div>
<div id="hs"><svg style="left:5px" viewBox="0 0 7 10"><path d="M6 1L1.500 5 6 9" stroke="#454545" stroke-width="2.100" fill="none"/></svg><div class="t"></div><svg style="left:1021px" viewBox="0 0 7 10"><path d="M1 1l4.500 4L1 9" stroke="#454545" stroke-width="2.100" fill="none"/></svg></div>
<div id="corner"></div>
<div id="pg">
<div class="sel">20<i></i><svg style="left:31px;top:5.500px;width:11px;height:7px" viewBox="0 0 11 7"><path d="M1 1l4.500 4.500L10 1" stroke="#555" stroke-width="1.500" fill="none"/></svg></div>
<div class="sep" style="left:59px"></div>
<svg style="left:72px" viewBox="0 0 14 14"><path d="M2 2v10" stroke="#58a5e6" stroke-width="2"/><path d="M12 2L5 7l7 5z" fill="#58a5e6"/></svg>
<svg style="left:101px" viewBox="0 0 14 14"><path d="M10.500 2L3.500 7l7 5z" fill="#58a5e6"/></svg>
<div class="sep" style="left:123px"></div>
<div class="tx" style="left:131px">第</div>
<div class="pin">1</div>
<div class="tx" style="left:180px">共1页</div>
<div class="sep" style="left:219px"></div>
<svg style="left:231px" viewBox="0 0 14 14"><path d="M3.500 2l7 5-7 5z" fill="#58a5e6"/></svg>
<svg style="left:259px" viewBox="0 0 14 14"><path d="M12 2v10" stroke="#58a5e6" stroke-width="2"/><path d="M2 2l7 5-7 5z" fill="#58a5e6"/></svg>
<div class="sep" style="left:282px"></div>
<svg style="left:291px" viewBox="0 0 14 14"><path d="M11.500 7a4.500 4.500 0 1 1-1.600-3.450" stroke="#2d86d6" stroke-width="2.200" fill="none"/><path d="M8.200 0.500l4 1.200-1.200 4z" fill="#2d86d6"/></svg>
<div class="inf">显示1到13,共13记录</div>
</div>
<div id="wm">
<svg width="69" height="58" viewBox="0 0 64 54" style="position:absolute;left:0;top:0"><g fill="#fff" stroke="#555" stroke-width="1.400"><path d="M22 3C11 3 3 10 3 19c0 5 2.600 9.200 6.800 12.200L8 37l6.500-3.300c2.300.7 4.800 1.100 7.500 1.100 11 0 19-7 19-15.800S33 3 22 3z"/><path d="M42 19c-10 0-18 6.500-18 14.500S32 48 42 48c2.200 0 4.300-.3 6.200-.9L54 50l-1.600-4.800C56 42.500 60 38.300 60 33.500 60 25.500 52 19 42 19z"/></g><g fill="#555"><circle cx="15.500" cy="14" r="2"/><circle cx="28" cy="14" r="2"/><circle cx="36" cy="29" r="1.700"/><circle cx="47.500" cy="29" r="1.700"/></g></svg>
<div class="t">软数</div>
</div>

</div>
</div>
</body>
</html>
